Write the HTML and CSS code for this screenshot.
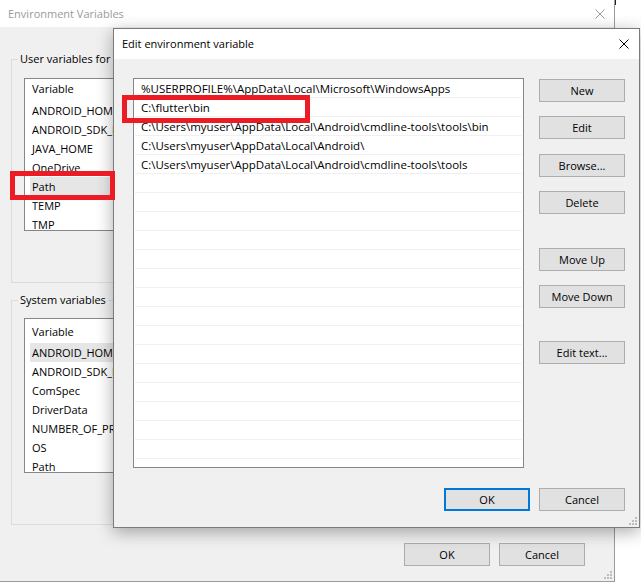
FILE: index.html
```html
<!DOCTYPE html>
<html>
<head>
<meta charset="utf-8">
<title>Edit environment variable</title>
<link rel="stylesheet" href="styles.css">
</head>
<body>
<div class="desk">
  <div class="tick"></div>

  <section class="win back">
    <header class="titlebar back-title">
      <span class="title">Environment Variables</span>
      <svg class="close" width="10" height="10" viewBox="0 0 10 10"><path d="M0.5 0.5L9.5 9.5M9.5 0.5L0.5 9.5" stroke="#9a9a9a" stroke-width="1" fill="none"/></svg>
    </header>
    <div class="back-body">
      <fieldset class="group g-user">
        <legend>User variables for myuser</legend>
        <div class="vlist vlist-user">
          <div class="vhead">Variable</div>
          <div class="vrow">ANDROID_HOME</div>
          <div class="vrow">ANDROID_SDK_ROOT</div>
          <div class="vrow">JAVA_HOME</div>
          <div class="vrow">OneDrive</div>
          <div class="vrow sel">Path</div>
          <div class="vrow">TEMP</div>
          <div class="vrow">TMP</div>
        </div>
      </fieldset>
      <fieldset class="group g-sys">
        <legend>System variables</legend>
        <div class="vlist vlist-sys">
          <div class="vhead">Variable</div>
          <div class="vrow sel">ANDROID_HOME</div>
          <div class="vrow">ANDROID_SDK_ROOT</div>
          <div class="vrow">ComSpec</div>
          <div class="vrow">DriverData</div>
          <div class="vrow">NUMBER_OF_PROCESSORS</div>
          <div class="vrow">OS</div>
          <div class="vrow">Path</div>
        </div>
      </fieldset>
      <div class="back-buttons">
        <button class="btn">OK</button>
        <button class="btn">Cancel</button>
      </div>
    </div>
    <svg class="grip back-grip" width="8" height="8" viewBox="0 0 8 8"><g fill="#bdbdbd"><rect x="6" y="0" width="2" height="2"/><rect x="3" y="3" width="2" height="2"/><rect x="6" y="3" width="2" height="2"/><rect x="0" y="6" width="2" height="2"/><rect x="3" y="6" width="2" height="2"/><rect x="6" y="6" width="2" height="2"/></g></svg>
  </section>

  <section class="win front">
    <header class="titlebar front-title">
      <span class="title">Edit environment variable</span>
      <svg class="close" width="10" height="10" viewBox="0 0 10 10"><path d="M0.5 0.5L9.5 9.5M9.5 0.5L0.5 9.5" stroke="#000" stroke-width="1" fill="none"/></svg>
    </header>
    <div class="front-body">
      <div class="main-row">
        <div class="pathlist">
          <div class="prow">%USERPROFILE%\AppData\Local\Microsoft\WindowsApps</div>
          <div class="prow">C:\flutter\bin</div>
          <div class="prow">C:\Users\myuser\AppData\Local\Android\cmdline-tools\tools\bin</div>
          <div class="prow">C:\Users\myuser\AppData\Local\Android\</div>
          <div class="prow">C:\Users\myuser\AppData\Local\Android\cmdline-tools\tools</div>
          <div class="prow"></div>
          <div class="prow"></div>
          <div class="prow"></div>
          <div class="prow"></div>
          <div class="prow"></div>
          <div class="prow"></div>
          <div class="prow"></div>
          <div class="prow"></div>
          <div class="prow"></div>
          <div class="prow"></div>
          <div class="prow"></div>
          <div class="prow"></div>
          <div class="prow"></div>
          <div class="prow"></div>
          <div class="prow"></div>
        </div>
        <div class="side">
          <button class="btn">New</button>
          <button class="btn s-edit">Edit</button>
          <button class="btn s-browse">Browse...</button>
          <button class="btn s-delete">Delete</button>
          <button class="btn s-up">Move Up</button>
          <button class="btn s-down">Move Down</button>
          <button class="btn s-text">Edit text...</button>
        </div>
      </div>
      <div class="footer">
        <button class="btn default">OK</button>
        <button class="btn">Cancel</button>
      </div>
    </div>
    <svg class="grip front-grip" width="8" height="8" viewBox="0 0 8 8"><g fill="#bdbdbd"><rect x="6" y="0" width="2" height="2"/><rect x="3" y="3" width="2" height="2"/><rect x="6" y="3" width="2" height="2"/><rect x="0" y="6" width="2" height="2"/><rect x="3" y="6" width="2" height="2"/><rect x="6" y="6" width="2" height="2"/></g></svg>
  </section>

  <div class="mark mark-path"></div>
  <div class="mark mark-flutter"></div>
</div>
</body>
</html>
```

FILE: styles.css
```css
* { box-sizing: border-box; }
html, body { margin: 0; padding: 0; }
body {
  width: 641px;
  height: 582px;
  overflow: hidden;
  background: #fff;
  font-family: "Open Sans", "Noto Sans", sans-serif;
  font-size: 11px;
  color: #000;
}
.desk { position: relative; width: 641px; height: 582px; overflow: hidden; }

.tick { position: absolute; left: 615px; top: 0; width: 1px; height: 5px; background: #222; }

.win { position: absolute; display: flex; flex-direction: column; }

.titlebar {
  background: #fff;
  display: flex;
  align-items: center;
  justify-content: space-between;
  flex: none;
}
.title { white-space: nowrap; line-height: 16px; }
.close { display: block; flex: none; }

/* Back window */
.back {
  left: -20px;
  top: -1px;
  width: 635px;
  height: 583px;
  border: 1px solid #9c9c9c;
  background: #f0f0f0;
}
.back-title { height: 27px; padding: 0 9px 0 27px; }
.back-title .title { color: #9a9a9a; }
.back-body {
  flex: 1;
  display: flex;
  flex-direction: column;
  align-items: flex-start;
  padding: 24px 0 0 30px;
}
.group {
  margin: 0;
  padding: 0 0 51px 0;
  border: 1px solid #dcdcdc;
  width: 592px;
  min-width: 0;
}
.group legend {
  margin-left: 6px;
  padding: 0 2px;
  line-height: 16px;
}
.g-sys { margin-top: 9px; }
.vlist {
  margin-left: 12px;
  width: 560px;
  background: #fff;
  border: 1px solid #828790;
  overflow: hidden;
}
.vlist-user { margin-top: 11px; height: 153px; }
.vlist-sys { margin-top: 10px; height: 155px; }
.vhead { padding-left: 7px; line-height: 19px; height: 22px; }
.vlist-sys .vhead { height: 24px; padding-top: 3px; }
.vrow {
  height: 19px;
  line-height: 19px;
  margin-left: 5px;
  padding-left: 2px;
  white-space: nowrap;
}
.vrow.sel { background: #e6e6e6; }
.back-buttons {
  align-self: stretch;
  display: flex;
  justify-content: flex-end;
  gap: 9px;
  margin-top: 18px;
  padding-right: 29px;
}

/* Buttons */
.btn {
  width: 86px;
  height: 23px;
  border: 1px solid #adadad;
  background: #e1e1e1;
  font: inherit;
  color: #000;
  padding: 0;
  line-height: 19px;
  flex: none;
}
.btn.default { border: 2px solid #0078d7; }

/* Front dialog */
.front {
  left: 113px;
  top: 28px;
  width: 527px;
  height: 500px;
  border: 1px solid #7a7a7a;
  background: #f0f0f0;
  box-shadow: 0 4px 16px rgba(0, 0, 0, 0.33);
}
.front-title { height: 30px; padding: 0 10px 0 8px; }
.front-body {
  flex: 1;
  display: flex;
  flex-direction: column;
  padding: 19px 14px 16px 19px;
}
.main-row { display: flex; gap: 15px; }
.pathlist {
  width: 391px;
  height: 390px;
  border: 1px solid #828790;
  background: #fff;
  padding: 0 1px;
  overflow: hidden;
  flex: none;
}
.prow {
  height: 19px;
  line-height: 20px;
  font-size: 11.5px;
  border-bottom: 1px solid #f0f0f0;
  padding-left: 6px;
  white-space: nowrap;
  overflow: visible;
}
.side { width: 86px; display: flex; flex-direction: column; padding-top: 1px; }
.s-edit { margin-top: 14px; }
.s-browse { margin-top: 15px; }
.s-delete { margin-top: 14px; }
.s-up { margin-top: 34px; }
.s-down { margin-top: 14px; }
.s-text { margin-top: 33px; }
.footer {
  display: flex;
  justify-content: flex-end;
  gap: 9px;
  margin-top: 20px;
}

.grip { position: absolute; right: 2px; bottom: 2px; }

/* Annotation boxes */
.mark { position: absolute; border: 5px solid #ed1c24; }
.mark-path { left: 10px; top: 171px; width: 105px; height: 29px; }
.mark-flutter { left: 122px; top: 95px; width: 188px; height: 28px; }
```
